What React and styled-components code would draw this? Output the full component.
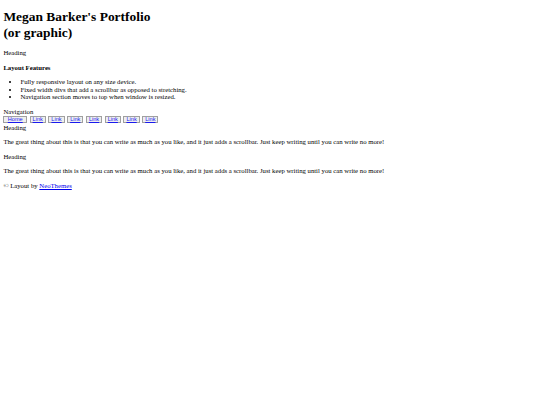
import React from "react";
import styled, { createGlobalStyle } from "styled-components";

const Global = createGlobalStyle`
  html, body { background: #fff; }
  body {
    margin: 3.4px;
    font-family: "Liberation Serif", "Times New Roman", serif;
    font-size: 6.72px;
    line-height: 1.15;
    color: #000;
  }
`;

const Title = styled.h1`
  font-size: 13.44px;
  font-weight: bold;
  margin: 6px 0 8.6px;
  line-height: 1.15;
`;

const Plain = styled.div``;

const SubTitle = styled.h4`
  font-size: 6.72px;
  font-weight: bold;
  margin: 7.3px 0 6.3px;
`;

const List = styled.ul`
  margin: 6.3px 0 6.8px;
  padding-left: 17px;
  list-style: disc;
`;

const Item = styled.li``;

const NavBar = styled.div`
  display: flex;
  gap: 2.5px;
  margin-bottom: 0.6px;
`;

const NavButton = styled.span`
  display: inline-block;
  font-family: "Liberation Sans", Arial, sans-serif;
  font-size: 5.6px;
  line-height: 1.05;
  padding: 0 ${(p) => (p.$wide ? "3.4px" : "2px")};
  border: 1px solid #a0a0a0;
  background: #efefef;
`;

const NavLink = styled.a`
  color: #1a1aee;
  text-decoration: underline;
`;

const Para = styled.p`
  margin: 6.72px 0;
`;

const Link = styled.a`
  color: #0000ee;
  text-decoration: underline;
`;

const navItems = ["Home", "Link", "Link", "Link", "Link", "Link", "Link", "Link"];
const text =
  "The great thing about this is that you can write as much as you like, and it just adds a scrollbar. Just keep writing until you can write no more!";

export default function App() {
  return (
    <>
      <Global />
      <Title>
        Megan Barker's Portfolio
        <br />
        (or graphic)
      </Title>
      <Plain>Heading</Plain>
      <SubTitle>Layout Features</SubTitle>
      <List>
        <Item>Fully responsive layout on any size device.</Item>
        <Item>Fixed width divs that add a scrollbar as opposed to stretching.</Item>
        <Item>Navigation section moves to top when window is resized.</Item>
      </List>
      <Plain>Navigation</Plain>
      <NavBar>
        {navItems.map((n, i) => (
          <NavButton key={i} $wide={i === 0}>
            <NavLink href="#">{n}</NavLink>
          </NavButton>
        ))}
      </NavBar>
      <Plain>Heading</Plain>
      <Para>{text}</Para>
      <Plain>Heading</Plain>
      <Para>{text}</Para>
      <Para>
        © Layout by <Link href="#">NeoThemes</Link>
      </Para>
    </>
  );
}
